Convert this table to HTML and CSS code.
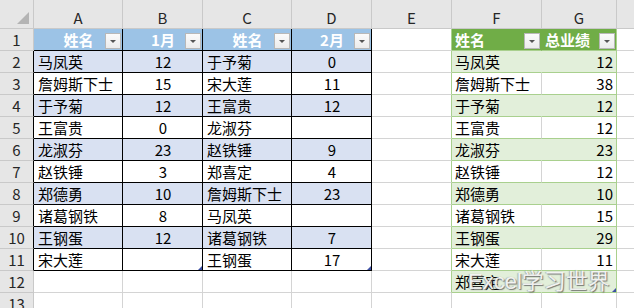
FILE: index.html
```html
<!DOCTYPE html>
<html lang="zh">
<head>
<meta charset="utf-8">
<link rel="stylesheet" href="styles.css">
</head>
<body>
<div class="sheet">
  <div class="corner"><span class="tri"></span></div>
  <div class="ch">A</div><div class="ch">B</div><div class="ch">C</div><div class="ch">D</div><div class="ch">E</div><div class="ch">F</div><div class="ch">G</div><div class="ch last"></div>

  <div class="rh">1</div>
  <div class="c t1 th ctr">姓名<span class="fb"></span></div>
  <div class="c t1 th ctr">1月<span class="fb"></span></div>
  <div class="c t1 th ctr">姓名<span class="fb"></span></div>
  <div class="c t1 th ctr">2月<span class="fb"></span></div>
  <div class="c e2"></div>
  <div class="c t2h">姓名<span class="fb"></span></div>
  <div class="c t2h t2r">总业绩<span class="fb"></span></div>
  <div class="c last"></div>

  <div class="rh rb">2</div>
  <div class="c t1 band">马凤英</div><div class="c t1 band ctr">12</div><div class="c t1 band">于予菊</div><div class="c t1 band ctr">0</div>
  <div class="c e2"></div><div class="c t2 b2">马凤英</div><div class="c t2 b2 t2r num">12</div><div class="c last"></div>

  <div class="rh rb">3</div>
  <div class="c t1">詹姆斯下士</div><div class="c t1 ctr">15</div><div class="c t1">宋大莲</div><div class="c t1 ctr">11</div>
  <div class="c e2"></div><div class="c t2">詹姆斯下士</div><div class="c t2 t2r num">38</div><div class="c last"></div>

  <div class="rh rb">4</div>
  <div class="c t1 band">于予菊</div><div class="c t1 band ctr">12</div><div class="c t1 band">王富贵</div><div class="c t1 band ctr">12</div>
  <div class="c e2"></div><div class="c t2 b2">于予菊</div><div class="c t2 b2 t2r num">12</div><div class="c last"></div>

  <div class="rh rb">5</div>
  <div class="c t1">王富贵</div><div class="c t1 ctr">0</div><div class="c t1">龙淑芬</div><div class="c t1 ctr"></div>
  <div class="c e2"></div><div class="c t2">王富贵</div><div class="c t2 t2r num">12</div><div class="c last"></div>

  <div class="rh rb">6</div>
  <div class="c t1 band">龙淑芬</div><div class="c t1 band ctr">23</div><div class="c t1 band">赵铁锤</div><div class="c t1 band ctr">9</div>
  <div class="c e2"></div><div class="c t2 b2">龙淑芬</div><div class="c t2 b2 t2r num">23</div><div class="c last"></div>

  <div class="rh rb">7</div>
  <div class="c t1">赵铁锤</div><div class="c t1 ctr">3</div><div class="c t1">郑喜定</div><div class="c t1 ctr">4</div>
  <div class="c e2"></div><div class="c t2">赵铁锤</div><div class="c t2 t2r num">12</div><div class="c last"></div>

  <div class="rh rb">8</div>
  <div class="c t1 band">郑德勇</div><div class="c t1 band ctr">10</div><div class="c t1 band">詹姆斯下士</div><div class="c t1 band ctr">23</div>
  <div class="c e2"></div><div class="c t2 b2">郑德勇</div><div class="c t2 b2 t2r num">10</div><div class="c last"></div>

  <div class="rh rb">9</div>
  <div class="c t1">诸葛钢铁</div><div class="c t1 ctr">8</div><div class="c t1">马凤英</div><div class="c t1 ctr"></div>
  <div class="c e2"></div><div class="c t2">诸葛钢铁</div><div class="c t2 t2r num">15</div><div class="c last"></div>

  <div class="rh rb">10</div>
  <div class="c t1 band">王钢蛋</div><div class="c t1 band ctr">12</div><div class="c t1 band">诸葛钢铁</div><div class="c t1 band ctr">7</div>
  <div class="c e2"></div><div class="c t2 b2">王钢蛋</div><div class="c t2 b2 t2r num">29</div><div class="c last"></div>

  <div class="rh rb">11</div>
  <div class="c t1">宋大莲</div><div class="c t1 ctr hdl"></div><div class="c t1">王钢蛋</div><div class="c t1 ctr hdl">17</div>
  <div class="c e2"></div><div class="c t2">宋大莲</div><div class="c t2 t2r num">11</div><div class="c last"></div>

  <div class="rh">12</div>
  <div class="c"></div><div class="c"></div><div class="c"></div><div class="c"></div>
  <div class="c e2"></div><div class="c t2 b2">郑喜定</div><div class="c t2 b2 t2r num hdl"></div><div class="c last"></div>

  <div class="rh">13</div>
  <div class="c"></div><div class="c"></div><div class="c"></div><div class="c"></div>
  <div class="c"></div><div class="c"></div><div class="c"></div><div class="c last"></div>

  <div class="wm">Excel学习世界</div>
</div>
</body>
</html>
```
FILE: styles.css
```css
html, body {
  margin: 0;
  padding: 0;
  background: #ffffff;
}
.sheet {
  position: relative;
  width: 634px;
  height: 308px;
  overflow: hidden;
  display: grid;
  grid-template-columns: 34px 89px 80px 89px 80px 80px 90px 75px 1fr;
  grid-template-rows: 29px repeat(13, 22px);
  font-family: "Noto Sans CJK SC", "Noto Sans", sans-serif;
  font-size: 15px;
  color: #000;
}
.corner, .ch, .rh {
  background: #e6e6e6;
  box-sizing: border-box;
  border-right: 1px solid #c9c9c9;
  border-bottom: 1px solid #c9c9c9;
  color: #262626;
  display: flex;
  justify-content: center;
}
.corner {
  position: relative;
}
.tri {
  position: absolute;
  right: 4px;
  bottom: 4px;
  width: 0;
  height: 0;
  border-left: 12px solid transparent;
  border-bottom: 12px solid #b4b4b4;
}
.ch {
  align-items: flex-end;
  padding-bottom: 1px;
  line-height: 18px;
}
.ch.last, .c.last {
  border-right: none;
}
.rh {
  align-items: center;
  line-height: 20px;
}
.rh.rb {
  border-right-color: #000;
}
.c {
  box-sizing: border-box;
  border-right: 1px solid #d4d4d4;
  border-bottom: 1px solid #d4d4d4;
  display: flex;
  align-items: center;
  padding: 0 3px 0 4px;
  white-space: nowrap;
  overflow: hidden;
  position: relative;
  line-height: 20px;
}
.ctr {
  justify-content: center;
}
.num {
  justify-content: flex-end;
}
.t1 {
  border-right-color: #000;
  border-bottom-color: #000;
}
.band {
  background: #d9e1f2;
}
.th {
  background: #9cc3e6;
  color: #fff;
  font-weight: bold;
}
.fb {
  position: absolute;
  right: 1px;
  bottom: 1px;
  width: 16px;
  height: 16px;
  box-sizing: border-box;
  border: 1px solid #b8b8b8;
  background: linear-gradient(#fbfbfb, #ececec);
}
.fb::after {
  content: "";
  position: absolute;
  left: 4px;
  top: 6px;
  border-left: 3px solid transparent;
  border-right: 3px solid transparent;
  border-top: 3px solid #555;
}
.e2 {
  border-right-color: #a9d08e;
}
.t2h {
  background: #70ad47;
  color: #fff;
  font-weight: bold;
  border-right-color: #70ad47;
  border-bottom-color: #a9d08e;
  padding-left: 3px;
}
.t2 {
  border-bottom-color: #a9d08e;
  padding-left: 3px;
}
.b2 {
  background: #e2efda;
  border-right-color: #e2efda;
}
.t2r {
  border-right-color: #a9d08e;
}
.hdl::after {
  content: "";
  position: absolute;
  right: 0;
  bottom: 0;
  border-left: 4px solid transparent;
  border-bottom: 4px solid #3c4fa3;
}
.wm {
  position: absolute;
  left: 468px;
  top: 269px;
  font-family: "Liberation Sans", "Noto Sans CJK SC", sans-serif;
  font-size: 22px;
  line-height: 26px;
  color: rgba(250, 250, 250, 0.92);
  text-shadow: 1px 1px 1px rgba(90, 90, 90, 0.8), -1px 0 1px rgba(120, 120, 120, 0.5);
  white-space: nowrap;
}
```
